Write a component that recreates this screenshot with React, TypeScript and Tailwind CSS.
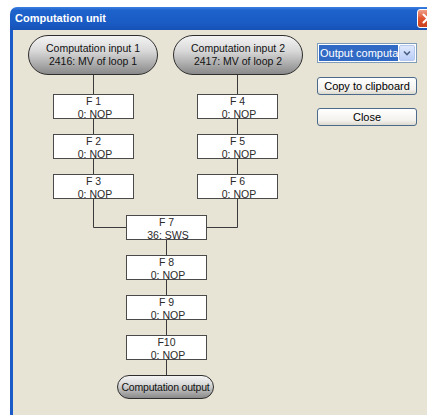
import React from "react";

const font = { fontFamily: '"Liberation Sans", Arial, sans-serif' };

function FBox({ left, top, title, op }: { left: number; top: number; title: string; op: string }) {
  return (
    <div
      className="absolute z-10 w-[81px] h-[25px] bg-white border border-[#4a4a4a] flex flex-col items-center text-[10.5px] leading-[12px] text-[#2a2a2a]"
      style={{ left, top }}
    >
      <span>{title}</span>
      <span className="mt-[1px] pl-[3px]">{op}</span>
    </div>
  );
}

function Pill({ left, top, w, h, children }: { left: number; top: number; w: number; h: number; children: React.ReactNode }) {
  return (
    <div
      className="absolute z-10 rounded-full border border-[#2e2e2e] bg-[linear-gradient(to_bottom,#f4f4f4_0%,#d8d8d8_40%,#9c9c9c_85%,#8a8a8a_100%)] flex flex-col items-center justify-center text-[10.5px] leading-[13px] text-[#111] whitespace-nowrap"
      style={{ left, top, width: w, height: h }}
    >
      {children}
    </div>
  );
}

export default function App() {
  return (
    <div className="w-[427px] h-[415px] bg-white overflow-hidden pt-[7px] pl-[10px]" style={font}>
      <div className="w-[430px] h-[420px] flex flex-col">
        {/* title bar */}
        <div className="h-[23px] flex-none rounded-t-[7px] bg-[linear-gradient(to_bottom,#3b7fe0_0%,#1d62cc_15%,#1a5bc4_70%,#1651b6_100%)] flex items-center pl-[5px] pr-[2px]">
          <span className="text-white font-bold text-[11px] flex-1">Computation unit</span>
          <div className="w-[21px] h-[19px] rounded-[3px] border border-white bg-[linear-gradient(to_bottom,#f0a08a,#e0542e_50%,#c9401e)] flex items-center justify-center">
            <svg width="11" height="11" viewBox="0 0 11 11">
              <path d="M1.5 1.5 L9.5 9.5 M9.5 1.5 L1.5 9.5" stroke="white" strokeWidth="2" strokeLinecap="round" />
            </svg>
          </div>
        </div>
        {/* body */}
        <div className="flex-1 flex border-l-[3px] border-[#1a5bc7] bg-[#E8E4D5]">
          <div className="relative w-[304px] flex-none h-full">
            <svg className="absolute left-0 top-0 z-0" width="304" height="390">
              <g stroke="#3a3a3a" strokeWidth="1" fill="none">
                <path d="M80.5 44 V64 M80.5 89 V104 M80.5 129 V144 M80.5 169 V197.5 H113" />
                <path d="M224.5 44 V64 M224.5 89 V104 M224.5 129 V144 M224.5 169 V197.5 H194" />
                <path d="M153.5 210 V225 M153.5 250 V265 M153.5 290 V305 M153.5 330 V345" />
              </g>
            </svg>
            <Pill left={15} top={5} w={130} h={40}>
              <span>Computation input 1</span>
              <span>2416: MV of loop 1</span>
            </Pill>
            <Pill left={160} top={5} w={130} h={40}>
              <span>Computation input 2</span>
              <span>2417: MV of loop 2</span>
            </Pill>
            <FBox left={40} top={64} title="F 1" op="0: NOP" />
            <FBox left={40} top={104} title="F 2" op="0: NOP" />
            <FBox left={40} top={144} title="F 3" op="0: NOP" />
            <FBox left={184} top={64} title="F 4" op="0: NOP" />
            <FBox left={184} top={104} title="F 5" op="0: NOP" />
            <FBox left={184} top={144} title="F 6" op="0: NOP" />
            <FBox left={113} top={185} title="F 7" op="36: SWS" />
            <FBox left={113} top={225} title="F 8" op="0: NOP" />
            <FBox left={113} top={265} title="F 9" op="0: NOP" />
            <FBox left={113} top={305} title="F10" op="0: NOP" />
            <Pill left={104} top={345} w={97} h={24}>
              <span className="tracking-[-0.2px]">Computation output</span>
            </Pill>
          </div>
          <div className="flex flex-col pt-[13px] w-[100px] flex-none">
            <div className="h-[20px] border border-[#7F9DB9] bg-white flex items-stretch p-[1px]">
              <div className="flex-1 bg-[#316AC5] text-white text-[11px] leading-[16px] pl-[1px] overflow-hidden whitespace-nowrap">
                Output computati
              </div>
              <div className="w-[16px] flex-none ml-[1px] rounded-[2px] bg-[linear-gradient(to_bottom,#dfe9fd,#b9cdf7)] border border-[#b5c8f0] flex items-center justify-center">
                <svg width="8" height="6" viewBox="0 0 8 6">
                  <path d="M1 1.5 L4 4.5 L7 1.5" stroke="#4d6185" strokeWidth="1.6" fill="none" />
                </svg>
              </div>
            </div>
            <button className="mt-[14px] h-[18px] rounded-[3px] border border-[#4b6a8c] bg-[linear-gradient(to_bottom,#ffffff,#f3f2ee_70%,#dcd9ce)] text-[11px] leading-[14px] text-black">
              Copy to clipboard
            </button>
            <button className="mt-[13px] h-[18px] rounded-[3px] border border-[#4b6a8c] bg-[linear-gradient(to_bottom,#ffffff,#f3f2ee_70%,#dcd9ce)] text-[11px] leading-[14px] text-black">
              Close
            </button>
          </div>
        </div>
      </div>
    </div>
  );
}
